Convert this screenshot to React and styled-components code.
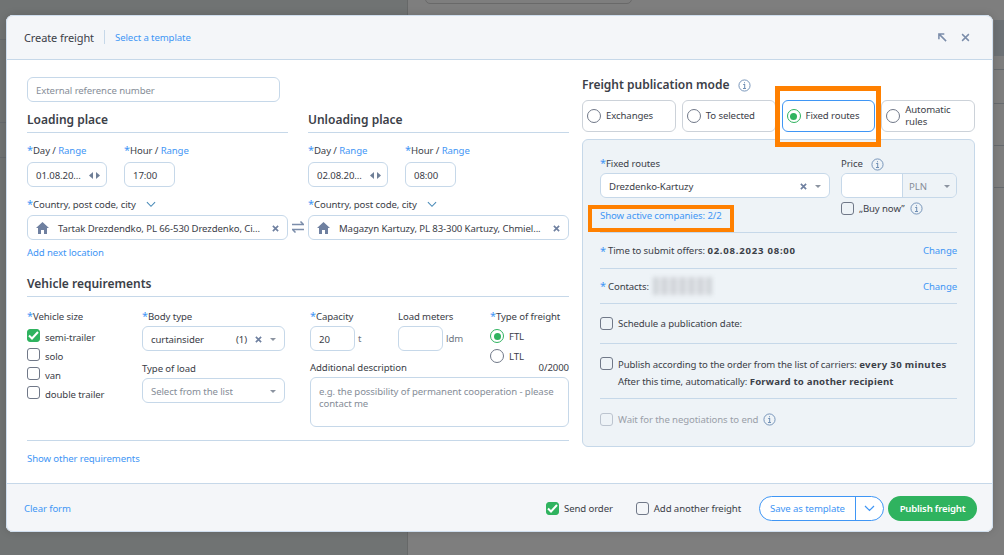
import React from "react";
import styled, { createGlobalStyle } from "styled-components";

const Global = createGlobalStyle`
  html, body { margin: 0; padding: 0; height: 100%; background: #7e7e7e; overflow: hidden; }
  * { box-sizing: border-box; }
  body { font-family: "Noto Sans", "Open Sans", sans-serif; font-size: 9.6px; letter-spacing: -0.1px; color: #3b4048; }
`;
const blue = "#3f96f5";
const line = "#c6d8e9";

const Backdrop = styled.div`position: relative; width: 1004px; height: 555px; padding: 15px 11px 23px 6px; background: #7e7e7e; overflow: hidden;`;
const GhostSide = styled.div`position: absolute; left: 0; top: 0; width: 408px; height: 555px; background: #707373; border-right: 1px solid #666868;`;
const GhostBox = styled.div`position: absolute; left: 425px; top: -12px; width: 207px; height: 16px; border: 1px solid #696969; border-radius: 5px;`;
const GhostBlock = styled.div`position: absolute; left: 994px; top: 20px; width: 10px; height: 36px; background: #6c7175;`;
const GhostRule = styled.div`position: absolute; left: ${(p) => p.$x}px; top: ${(p) => p.$y}px; width: 10px; height: 1px; background: #666a6e;`;
const Modal = styled.div`
  position: relative; width: 987px; height: 517px; background: #fff; border-radius: 7px; display: flex; flex-direction: column; overflow: hidden;
  box-shadow: 0 0 8px rgba(0,0,0,.14); outline: 1px solid #cfdeee; outline-offset: -1px;
`;
const Header = styled.header`height: 45px; flex: none; display: flex; align-items: center; padding: 0 23px 0 18px; background: #f4f6f9; border-bottom: 1px solid ${line};`;
const ModalTitle = styled.span`font-size: 11px; color: #3b4048;`;
const HeaderSep = styled.span`width: 1px; height: 14px; background: ${line}; margin: 0 10px;`;
const HeaderIcons = styled.div`margin-left: auto; display: flex; align-items: center; gap: 14px; color: #7b8daa;`;
const Link = styled.span`color: ${blue}; white-space: nowrap;`;

const Body = styled.main`flex: 1; display: flex; min-height: 0;`;
const Left = styled.section`width: 563px; flex: none; padding: 17px 0 0 21px;`;
const Right = styled.section`width: 393px; margin-left: 13px; padding-top: 16px;`;

const Field = styled.div`
  height: 25px; width: ${(p) => (p.$w ? p.$w + "px" : "100%")}; flex: none; border: 1px solid ${line}; border-radius: 6px; background: #fff;
  display: flex; align-items: center; padding: 1px 8px 0; color: ${(p) => (p.$muted ? "#868d98" : "#3b4048")}; white-space: nowrap; overflow: hidden;
`;
const Places = styled.div`display: grid; grid-template-columns: 261px 261px; column-gap: 20px;`;
const Place = styled.div``;
const SectionTitle = styled.h2`
  margin: ${(p) => p.$mt ?? 9}px 0 0; font-size: 12px; letter-spacing: 0; line-height: 18px; font-weight: 600; color: #3b4048; padding-bottom: 3px; border-bottom: 1px solid ${line};
`;
const DateRow = styled.div`display: flex; gap: 17px; margin-top: 10px;`;
const DateCol = styled.div`display: flex; flex-direction: column; gap: 5px;`;
const Label = styled.div`height: 14px; padding-top: 1px; line-height: 14px; white-space: nowrap; color: #3b4048;`;
const Star = styled.span`color: ${blue}; font-size: 11px; line-height: 10px;`;
const Arrows = styled.span`margin: 0 -2px 0 auto; display: flex; gap: 3px; color: #6f7f97;`;
const CountryLabel = styled(Label)`margin: 10px 0 4px; display: flex; align-items: center; gap: 10px;`;
const CountryText = styled.span``;
const LocationWrap = styled.div`position: relative;`;
const LocationText = styled.span`flex: 1; margin: 0 7px 0 9px; color: #3b4048;`;
const Swap = styled.span`position: absolute; right: -16px; top: 6px; color: #7b8daa; display: flex;`;
const XMark = styled.span`display: flex; color: #6f80a0; flex: none;`;
const AddLink = styled.div`margin-top: 5px; padding-top: 1px; height: 15px; line-height: 14px;`;

const ReqGrid = styled.div`display: grid; grid-template-columns: 115px 168px 259px; margin-top: 12px;`;
const Col = styled.div`display: flex; flex-direction: column;`;
const CheckList = styled.div`display: flex; flex-direction: column; gap: 5px; margin-top: 5px;`;
const CheckRow = styled.label`display: flex; align-items: center; gap: 5px; height: 14px; white-space: nowrap; color: ${(p) => (p.$off ? "#9aa0a9" : "#3b4048")};`;
const ListText = styled.span`padding-top: 4px;`;
const Box = styled.span`
  width: 13px; height: 13px; flex: none; border-radius: 3px; display: flex; align-items: center; justify-content: center; background: ${(p) => (p.$on ? "#2fb35f" : "transparent")};
  border: 1px solid ${(p) => (p.$on ? "#2fb35f" : p.$off ? "#bcc4cf" : "#707888")};
`;
const StackField = styled(Field)`margin-top: 3px; width: 143px;`;
const Count = styled.span`margin-left: auto; margin-right: 8px;`;
const Caret = styled.span`width: 0; height: 0; margin-left: ${(p) => p.$ml || 8}px; border: 3px solid transparent; border-top: 3.5px solid #8b93a0; border-bottom: 0; flex: none;`;
const FreeLabel = styled(Label)`margin-top: 10px;`;
const SelectGap = styled.span`margin-left: auto;`;
const Metrics = styled.div`display: grid; grid-template-columns: 88px 92px 1fr; height: 42px;`;
const UnitRow = styled.div`display: flex; align-items: center; gap: 3px; margin-top: 3px; color: #6d7480;`;
const RadioList = styled.div`display: flex; flex-direction: column; gap: 6px; margin-top: 6px;`;
const RadioRow = styled.label`display: flex; align-items: center; gap: 5px; height: 14px;`;
const Radio = styled.span`
  width: 14px; height: 14px; flex: none; border-radius: 50%; border: 1.5px solid ${(p) => (p.$on ? "#2fb35f" : "#707888")}; display: flex; align-items: center; justify-content: center;
  &::after { content: ""; width: 7px; height: 7px; border-radius: 50%; background: ${(p) => (p.$on ? "#2fb35f" : "transparent")}; }
`;
const DescHead = styled.div`display: flex; justify-content: space-between; margin-top: 9px; height: 14px; padding-top: 1px; line-height: 14px;`;
const TextArea = styled.div`height: 50px; margin-top: 3px; border: 1px solid ${line}; border-radius: 6px; padding: 8px 8px 0; color: #868d98; line-height: 12px;`;
const Divider = styled.div`height: 1px; background: ${line}; margin-top: 13px; width: 542px;`;
const OtherLink = styled.div`margin-top: 10px; padding-top: 1px; line-height: 14px;`;

const ModeTitle = styled.div`display: flex; align-items: center; gap: 9px; font-size: 12px; letter-spacing: 0; line-height: 18px; font-weight: 600;`;
const Modes = styled.div`display: grid; grid-template-columns: repeat(4, 1fr); column-gap: 6px; margin-top: 6px;`;
const Mode = styled.div`
  height: 32px; border: 1px solid ${(p) => (p.$on ? blue : "#ccd2d9")}; border-radius: 6px; display: flex; align-items: center; gap: 5px; padding: 0 4px; line-height: 12px; position: relative;
`;
const Highlight = styled.div`position: absolute; left: ${(p) => p.$x}px; top: ${(p) => p.$y}px; width: ${(p) => p.$w}px; height: ${(p) => p.$h}px; border: ${(p) => p.$b}px solid #ff8000; pointer-events: none;`;
const Panel = styled.div`height: 308px; margin-top: 7px; background: #eef3f7; border: 1px solid ${line}; border-radius: 6px; padding: 16px 17px 0;`;
const PanelTop = styled.div`display: grid; grid-template-columns: 241px 116px; height: 76px;`;
const RouteField = styled(Field)`margin-top: 3px;`;
const PriceField = styled.div`height: 25px; margin-top: 3px; display: flex; border: 1px solid ${line}; border-radius: 6px; overflow: hidden;`;
const PriceInput = styled.div`width: 60px; background: #fff;`;
const Currency = styled.div`flex: 1; background: #eef3f7; border-left: 1px solid ${line}; display: flex; align-items: center; padding: 1px 6px 0; color: #868d98;`;
const BuyRow = styled(CheckRow)`margin-top: 3px;`;
const ShowLink = styled.div`margin-top: 11px; line-height: 14px;`;
const Row = styled.div`height: ${(p) => p.$h}px; border-top: 1px solid ${line}; display: flex; align-items: center; justify-content: space-between;`;
const PublishRow = styled.div`height: ${(p) => p.$h}px; border-top: 1px solid ${line}; display: flex; gap: 5px; padding-top: 13px;`;
const Inline = styled.div`display: flex; align-items: center; gap: ${(p) => p.$gap ?? 2}px; white-space: nowrap;`;
const Strong = styled.b`font-weight: 700; letter-spacing: ${(p) => p.$ls ?? 0.2}px;`;
const Blur = styled.span`width: 59px; height: 18px; margin-left: 2px; background: repeating-linear-gradient(90deg, #cfd3d8 0 5px, #e2e5e9 5px 9px); filter: blur(2px);`;
const PublishText = styled.div`line-height: 17px; margin-top: -1px; white-space: nowrap;`;
const Muted = styled.span`color: #9aa0a9;`;

const Footer = styled.footer`height: 49px; flex: none; background: #f4f6f9; border-top: 1px solid ${line}; display: flex; align-items: center; padding: 0 16px 0 18px;`;
const Spacer = styled.div`flex: 1;`;
const FooterCheck = styled(CheckRow)`margin-right: ${(p) => p.$mr}px;`;
const SplitButton = styled.div`width: 125px; height: 25px; border: 1px solid ${blue}; border-radius: 13px; display: flex; background: #fff; color: ${blue};`;
const SplitMain = styled.div`width: 96px; display: flex; align-items: center; justify-content: center; border-right: 1px solid ${blue};`;
const SplitArrow = styled.div`flex: 1; display: flex; align-items: center; justify-content: center;`;
const Publish = styled.button`width: 89px; height: 25px; margin-left: 4px; border: 0; border-radius: 13px; background: #2fb35f; color: #fff; font: 600 9.6px "Noto Sans", sans-serif; letter-spacing: -0.2px; padding: 0;`;

const Info = () => (
  <svg width="13" height="13" viewBox="0 0 14 14" fill="none" stroke="#6f8fb5"><circle cx="7" cy="7" r="6" /><path d="M5.6 6h1.6v4M5.4 10.2h3.2M7 3.4v1.2" strokeWidth="1.1" /></svg>
);
const Chevron = ({ color = "#4a8bb8", w = 11 }) => (
  <svg width={w} height="7" viewBox="0 0 11 7" fill="none" stroke={color} strokeWidth="1.2"><path d="M1 1l4.5 4.5L10 1" /></svg>
);
const X = ({ size = 7, w = 1.9 }) => (
  <svg width={size} height={size} viewBox="0 0 8 8" fill="none" stroke="currentColor" strokeWidth={w}><path d="M1 1l6 6M7 1L1 7" /></svg>
);
const Check = () => (
  <svg width="11" height="9" viewBox="0 0 11 9" fill="none" stroke="#fff" strokeWidth="2"><path d="M1 4.5L4 7.5 10 1" /></svg>
);
const Home = () => (
  <svg width="13" height="12" viewBox="0 0 13 12" fill="#6f80a0"><path d="M6.5 0L13 6h-2v6H8V8H5v4H2V6H0z" /></svg>
);
const SwapIcon = () => (
  <svg width="12" height="12" viewBox="0 0 12 12" fill="none" stroke="currentColor" strokeWidth="1.5"><path d="M0 3.5h11.5L8.5 0.5M12 8.5H0.5L3.5 11.5" /></svg>
);
const DateArrows = () => (
  <Arrows>
    <svg width="4" height="7" viewBox="0 0 4 7" fill="currentColor"><path d="M4 0v7L0 3.5z" /></svg>
    <svg width="4" height="7" viewBox="0 0 4 7" fill="currentColor"><path d="M0 0v7l4-3.5z" /></svg>
  </Arrows>
);

const Req = ({ children }) => <><Star>*</Star>{children}</>;

const PlaceBlock = ({ title, date, hour, place, swap }) => (
  <Place>
    <SectionTitle>{title}</SectionTitle>
    <DateRow>
      <DateCol>
        <Label><Req>Day / </Req><Link>Range</Link></Label>
        <Field $w={80}>{date}<DateArrows /></Field>
      </DateCol>
      <DateCol>
        <Label><Req>Hour / </Req><Link>Range</Link></Label>
        <Field $w={51}>{hour}</Field>
      </DateCol>
    </DateRow>
    <CountryLabel><CountryText><Req>Country, post code, city</Req></CountryText><Chevron w={10} /></CountryLabel>
    <LocationWrap>
      <Field>
        <Home />
        <LocationText>{place}</LocationText>
        <XMark><X /></XMark>
      </Field>
      {swap && <Swap><SwapIcon /></Swap>}
    </LocationWrap>
  </Place>
);

const Check1 = ({ label, on }) => (
  <CheckRow><Box $on={on}>{on && <Check />}</Box><ListText>{label}</ListText></CheckRow>
);

export default function App() {
  return (
    <Backdrop>
      <Global />
      <GhostSide />
      <GhostBox />
      <GhostBlock />
      {[[0, 39], [0, 122], [0, 157], [994, 69], [994, 103], [994, 145], [994, 187]].map(([x, y]) => (
        <GhostRule key={x + "-" + y} $x={x} $y={y} />
      ))}
      <Modal>
        <Header>
          <ModalTitle>Create freight</ModalTitle>
          <HeaderSep />
          <Link>Select a template</Link>
          <HeaderIcons>
            <svg width="9" height="9" viewBox="0 0 10 10" fill="none" stroke="currentColor" strokeWidth="1.7"><path d="M1 7V1h6M1 1l8 8" /></svg>
            <X size={9} w={1.3} />
          </HeaderIcons>
        </Header>
        <Body>
          <Left>
            <Field $w={253} $muted>External reference number</Field>
            <Places>
              <PlaceBlock title="Loading place" date="01.08.20..." hour="17:00" place="Tartak Drezdendko, PL 66-530 Drezdenko, Ci..." swap />
              <PlaceBlock title="Unloading place" date="02.08.20..." hour="08:00" place="Magazyn Kartuzy, PL 83-300 Kartuzy, Chmiel..." />
            </Places>
            <AddLink><Link>Add next location</Link></AddLink>
            <SectionTitle $mt={15}>Vehicle requirements</SectionTitle>
            <ReqGrid>
              <Col>
                <Label><Req>Vehicle size</Req></Label>
                <CheckList>
                  <Check1 label="semi-trailer" on />
                  <Check1 label="solo" />
                  <Check1 label="van" />
                  <Check1 label="double trailer" />
                </CheckList>
              </Col>
              <Col>
                <Label><Req>Body type</Req></Label>
                <StackField>curtainsider<Count>(1)</Count><XMark><X /></XMark><Caret /></StackField>
                <FreeLabel>Type of load</FreeLabel>
                <StackField $muted>Select from the list<SelectGap /><Caret /></StackField>
              </Col>
              <Col>
                <Metrics>
                  <Col>
                    <Label><Req>Capacity</Req></Label>
                    <UnitRow><Field $w={45}>20</Field>t</UnitRow>
                  </Col>
                  <Col>
                    <Label>Load meters</Label>
                    <UnitRow><Field $w={45} />ldm</UnitRow>
                  </Col>
                  <Col>
                    <Label><Req>Type of freight</Req></Label>
                    <RadioList>
                      <RadioRow><Radio $on />FTL</RadioRow>
                      <RadioRow><Radio />LTL</RadioRow>
                    </RadioList>
                  </Col>
                </Metrics>
                <DescHead><span>Additional description</span><span>0/2000</span></DescHead>
                <TextArea>e.g. the possibility of permanent cooperation - please contact me</TextArea>
              </Col>
            </ReqGrid>
            <Divider />
            <OtherLink><Link>Show other requirements</Link></OtherLink>
          </Left>
          <Right>
            <ModeTitle>Freight publication mode <Info /></ModeTitle>
            <Modes>
              <Mode><Radio />Exchanges</Mode>
              <Mode><Radio />To selected</Mode>
              <Mode $on><Radio $on />Fixed routes</Mode>
              <Mode><Radio />Automatic<br />rules</Mode>
            </Modes>
            <Panel>
              <PanelTop>
                <Col>
                  <Label><Req>Fixed routes</Req></Label>
                  <RouteField $w={230}>Drezdenko-Kartuzy<SelectGap /><XMark><X /></XMark><Caret /></RouteField>
                  <ShowLink><Link>Show active companies: 2/2</Link></ShowLink>
                </Col>
                <Col>
                  <Label><Inline $gap={8}>Price <Info /></Inline></Label>
                  <PriceField><PriceInput /><Currency>PLN<SelectGap /><Caret /></Currency></PriceField>
                  <BuyRow><Box />„Buy now” <Info /></BuyRow>
                </Col>
              </PanelTop>
              <Row $h={36}>
                <Inline><Star>*</Star><span>Time to submit offers: <Strong $ls={0.75}>02.08.2023 08:00</Strong></span></Inline>
                <Link>Change</Link>
              </Row>
              <Row $h={35}>
                <Inline><Star>*</Star>Contacts: <Blur /></Inline>
                <Link>Change</Link>
              </Row>
              <Row $h={40}>
                <CheckRow><Box />Schedule a publication date:</CheckRow>
              </Row>
              <PublishRow $h={55}>
                <Box />
                <PublishText>
                  Publish according to the order from the list of carriers: <Strong $ls={0.35}>every 30 minutes</Strong><br />
                  After this time, automatically: <Strong>Forward to another recipient</Strong>
                </PublishText>
              </PublishRow>
              <Row $h={42}>
                <CheckRow $off><Box $off /><Muted>Wait for the negotiations to end</Muted><Info /></CheckRow>
              </Row>
            </Panel>
          </Right>
        </Body>
        <Footer>
          <Link>Clear form</Link>
          <Spacer />
          <FooterCheck $mr={23}><Box $on><Check /></Box>Send order</FooterCheck>
          <FooterCheck $mr={18}><Box />Add another freight</FooterCheck>
          <SplitButton>
            <SplitMain>Save as template</SplitMain>
            <SplitArrow><Chevron color={blue} /></SplitArrow>
          </SplitButton>
          <Publish>Publish freight</Publish>
        </Footer>
        <Highlight $x={769} $y={71} $w={106} $h={61} $b={5} />
        <Highlight $x={582} $y={190} $w={146} $h={27} $b={4} />
      </Modal>
    </Backdrop>
  );
}
